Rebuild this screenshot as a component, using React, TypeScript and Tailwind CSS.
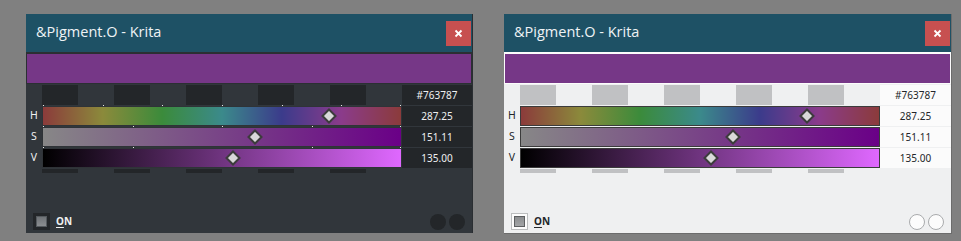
const HEX = "#763787";
const H = 287.25;
const S = 151.11;
const V = 135.0;

const dark = {
  win: "w-[447px] h-[219px] bg-[#31363b] border-r border-[#2a2e32]",
  topLine: "h-px bg-[#2b2f33]",
  color: "border border-[#2b2f33]",
  swatch: "bg-[#232629]",
  cell: "bg-[#232629] text-[#eff0f1]",
  label: "text-[#eff0f1]",
  bar: "border border-[#2f3337]",
  check: "bg-[#232629]",
  checkInner: "border border-[#555a5e] bg-gradient-to-b from-[#6f7377] to-[#8a8d90]",
  on: "text-[#eff0f1]",
  circle: "bg-[#232629]",
  ticks: true,
};

const light = {
  win: "w-[448px] h-[220px] bg-[#eff0f1] border-r border-b border-[#6c6c6c]",
  topLine: "h-px bg-[#fcfcfc]",
  color: "border border-[#fcfcfc]",
  swatch: "bg-[#c0c1c3]",
  cell: "bg-[#fbfbfb] text-[#232629]",
  label: "text-[#232629]",
  bar: "border border-[#3b3b3b]",
  check: "bg-[#fcfcfc] border border-[#bcbebf]",
  checkInner: "border border-[#5d5f61] bg-gradient-to-b from-[#8b8d8f] to-[#a3a5a7]",
  on: "text-[#232629]",
  circle: "bg-[#fcfcfc] border border-[#a9abad]",
  ticks: false,
};

type Theme = typeof dark;

function Thumb({ pos }: { pos: number }) {
  return (
    <svg
      width="16"
      height="16"
      viewBox="0 0 16 16"
      className="absolute top-1/2 -translate-x-1/2 -translate-y-1/2"
      style={{ left: `${pos * 100}%` }}
    >
      <polygon points="8,1.5 14.5,8 8,14.5 1.5,8" fill="#d9d9d9" stroke="#3c3c3c" strokeWidth="2" />
    </svg>
  );
}

function Ticks({ at }: { at: number[] }) {
  return (
    <>
      {at.map((p, i) => (
        <span
          key={i}
          className="absolute -top-[2px] w-px h-px bg-[#e6e6e6]"
          style={{ left: `calc(${p * 100}% - ${p === 1 ? 1 : 0}px)` }}
        />
      ))}
    </>
  );
}

function Row({
  t,
  label,
  value,
  grad,
  pos,
  ticks,
}: {
  t: Theme;
  label: string;
  value: string;
  grad: string;
  pos: number;
  ticks: number[];
}) {
  return (
    <div className="flex h-[20px]">
      <div className={`w-[16px] flex items-center justify-center text-[10.5px] ${t.label}`}>{label}</div>
      <div className={`relative w-[360px] ${t.bar}`}>
        <div className="absolute inset-0" style={{ background: grad }} />
        {t.ticks && <Ticks at={ticks} />}
        <Thumb pos={pos} />
      </div>
      <div className={`flex-1 flex items-center justify-center text-[10px] ${t.cell}`}>{value}</div>
    </div>
  );
}

function Swatches({ t, h }: { t: Theme; h: string }) {
  return (
    <div className={`flex ${h} w-[360px]`}>
      {[0, 1, 2, 3, 4, 5, 6, 7, 8, 9].map((i) => (
        <div key={i} className={`w-[36px] ${i % 2 === 0 ? t.swatch : ""}`} />
      ))}
    </div>
  );
}

function PigmentWindow({ t }: { t: Theme }) {
  const hueGrad =
    "linear-gradient(to right, #8b3b3b, #8b8a3b 16.7%, #3b8b3b 33.3%, #3b8a8b 50%, #3b3b8b 66.7%, #8b3b8b 83.3%, #8b3b3b)";
  const satGrad = "linear-gradient(to right, #878787, #6a0087)";
  const valGrad = "linear-gradient(to right, #000000, #df68ff)";
  return (
    <div className={`flex flex-col ${t.win}`}>
      <div className="h-[38px] shrink-0 bg-[#1e5165] flex items-center justify-between pl-[10px] pr-px">
        <span className="text-[14.5px] text-[#eef3f5] font-['Open_Sans',sans-serif] leading-none -mt-px">
          &amp;Pigment.O - Krita
        </span>
        <button className="w-[25px] h-[25px] bg-[#c75050] flex items-center justify-center">
          <svg width="9" height="9" viewBox="0 0 9 9">
            <path d="M1.5 1.5 L7.5 7.5 M7.5 1.5 L1.5 7.5" stroke="#ffffff" strokeWidth="1.8" />
          </svg>
        </button>
      </div>
      <div className={t.topLine} />
      <div className={`h-[31px] bg-[#763787] ${t.color}`} />
      <div className="flex flex-col gap-px pt-px">
        <div className="flex h-[20px]">
          <div className="w-[16px]" />
          <Swatches t={t} h="h-[20px]" />
          <div className={`flex-1 flex items-center justify-center text-[10px] ${t.cell}`}>{HEX}</div>
        </div>
        <Row t={t} label="H" value={H.toFixed(2)} grad={hueGrad} pos={H / 360} ticks={[0, 1 / 6, 2 / 6, 3 / 6, 4 / 6, 5 / 6, 1]} />
        <Row t={t} label="S" value={S.toFixed(2)} grad={satGrad} pos={S / 255} ticks={[0, 0.25, 0.5, 0.75, 1]} />
        <Row t={t} label="V" value={V.toFixed(2)} grad={valGrad} pos={V / 255} ticks={[0, 0.25, 0.75, 1]} />
        <div className="flex">
          <div className="w-[16px]" />
          <Swatches t={t} h="h-[4px]" />
        </div>
      </div>
      <div className="flex-1" />
      <div className="flex items-center justify-between pl-[7px] pr-[7px] pb-[3px]">
        <div className="flex items-center gap-[6px]">
          <div className={`w-[17px] h-[17px] flex items-center justify-center ${t.check}`}>
            <div className={`w-[11px] h-[11px] ${t.checkInner}`} />
          </div>
          <span className={`text-[10px] font-bold ${t.on}`}>
            <span className="underline underline-offset-2">O</span>N
          </span>
        </div>
        <div className="flex gap-[3px]">
          <div className={`w-[16px] h-[16px] rounded-full ${t.circle}`} />
          <div className={`w-[16px] h-[16px] rounded-full ${t.circle}`} />
        </div>
      </div>
    </div>
  );
}

export default function App() {
  return (
    <div className="w-[961px] h-[241px] bg-[#808080] pt-[14px] pl-[26px] flex items-start gap-[31px] font-['Noto_Sans',sans-serif]">
      <PigmentWindow t={dark} />
      <PigmentWindow t={light} />
    </div>
  );
}
